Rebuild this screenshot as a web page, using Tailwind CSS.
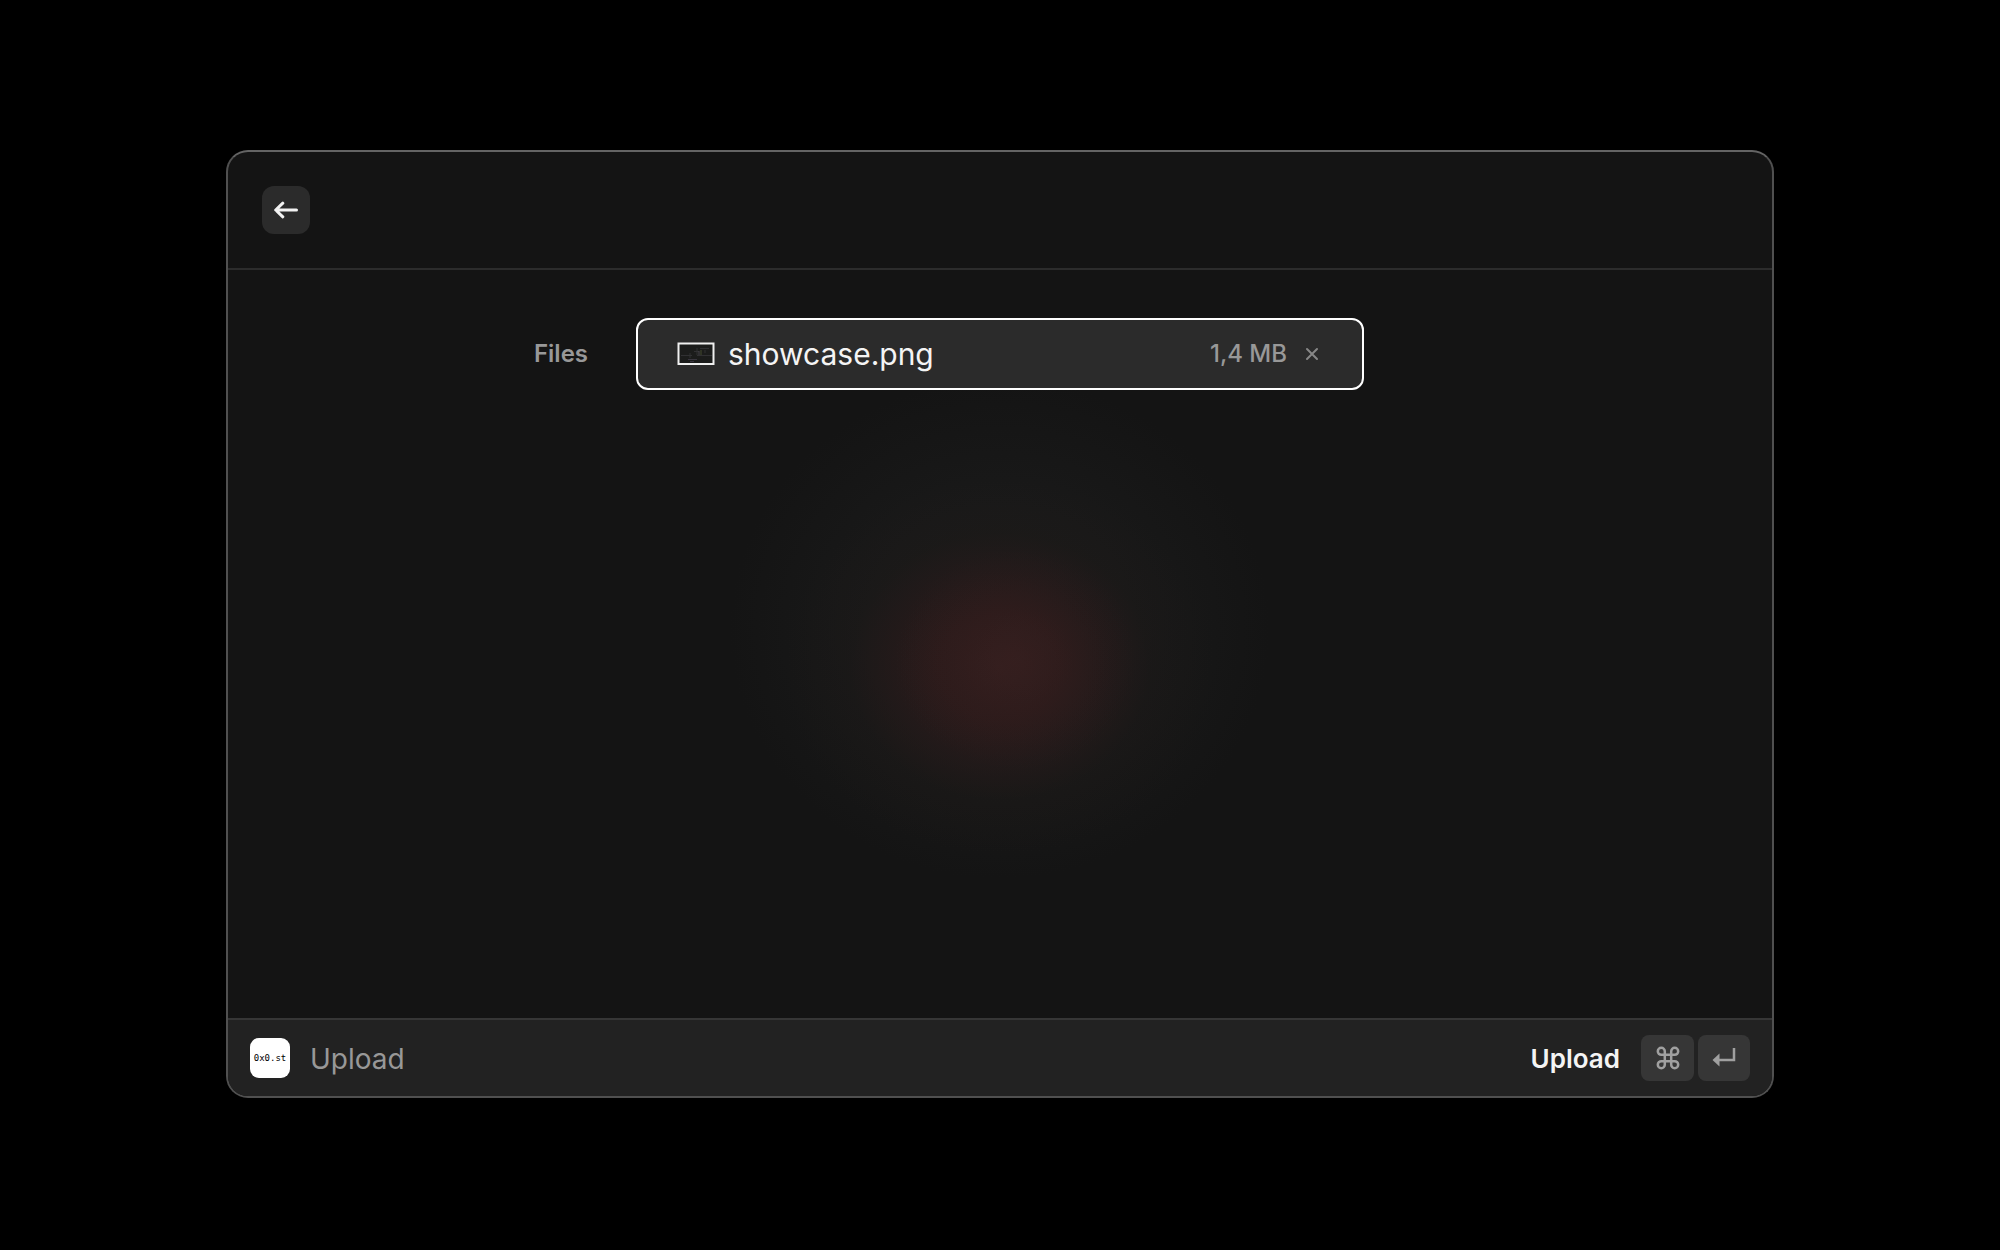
<!DOCTYPE html>
<html lang="en">
<head>
<meta charset="utf-8">
<title>Upload</title>
<script src="https://cdn.jsdelivr.net/npm/@tailwindcss/browser@4"></script>
</head>
<body class="flex min-h-screen flex-col bg-black px-[226px] pt-[150px] pb-[152px] font-['Inter',sans-serif]">
<div class="flex flex-1 flex-col overflow-hidden rounded-[22px] border-2 border-[#505050] border-t-[#646464] bg-[#141414]">
  <header class="flex items-center border-b-2 border-[#2c2c2c] px-[34px] py-[34px]">
    <button type="button" aria-label="Back" class="flex size-12 items-center justify-center rounded-xl bg-[#2b2b2b] text-[#f2f2f2]">
      <svg class="size-6" viewBox="0 0 24 24" fill="none" stroke="currentColor" stroke-width="3" stroke-linecap="round" stroke-linejoin="round"><path d="M22.500 12H2M8.800 5.200 1.700 12l7.100 6.800"/></svg>
    </button>
  </header>

  <main class="flex-1 bg-[radial-gradient(ellipse_120px_110px_at_51%_52%,#3e242450_0%,#35202030_50%,transparent_100%),radial-gradient(ellipse_215px_190px_at_50%_53%,#351d1de0_0%,#311b1bcc_28%,#291a1a90_50%,#1e191750_70%,transparent_100%),radial-gradient(ellipse_270px_250px_at_50%_48%,#1d1b1b_0%,#191919_50%,#141414_100%)] pt-12">
    <div class="grid grid-cols-[1fr_728px_1fr] items-center">
      <label for="files" class="pr-12 text-right text-2xl font-semibold text-[#989898]">Files</label>
      <div class="flex h-[72px] items-center rounded-xl border-2 border-white bg-[#2b2b2b] pr-[42px] pl-[39px]">
        <input id="files" type="file" class="sr-only">
        <svg class="mr-[13px] h-6 w-[38px]" viewBox="0 0 38 24" fill="none">
          <path fill="#1b1c1b" stroke="#f0f0f0" stroke-width="2" d="M1.500 1.500h35v20.500h-35z"/>
          <path stroke="#303032" d="M4 13.500h11M13 11v5M17 9.500h5M20 6v7M20 13.500h15M23 6.500h9M28 8v3"/>
          <path stroke="#39363f" d="M11 17.500h9M13 19.500h4"/>
          <path stroke="#47434b" d="M22 9v4"/><path stroke="#454a2e" d="M24 8v5"/>
        </svg>
        <span class="flex-1 text-3xl text-[#f4f4f4]">showcase.png</span>
        <span class="text-2xl font-medium text-[#989898]">1,4 MB</span>
        <button type="button" aria-label="Remove showcase.png" class="ml-[17px] flex size-4 items-center justify-center text-[#878787]">
          <svg class="size-4" viewBox="0 0 16 16" fill="none" stroke="currentColor" stroke-width="2" stroke-linecap="round"><path d="m3 3 10 10M13 3 3 13"/></svg>
        </button>
      </div>
    </div>
  </main>

  <footer class="flex h-[78px] items-center border-t-2 border-[#363636] bg-[#222222] px-[22px]">
    <div class="flex size-10 items-center justify-center rounded-[9px] bg-white pt-0.5 font-['DejaVu_Sans_Mono',monospace] text-[9px] text-black">0x0.st</div>
    <h1 class="ml-5 flex-1 pt-0.5 text-[28px] text-[#989898]">Upload</h1>
    <button type="button" class="flex items-center text-[#f4f4f4]">
      <span class="mr-[21px] text-[26px] font-semibold">Upload</span>
      <kbd class="mr-1 flex h-[46px] w-[53px] items-center justify-center rounded-lg bg-[#363636] text-[#a0a0a0]">
        <svg class="size-6" viewBox="0 0 24 24" fill="none" stroke="currentColor" stroke-width="2.500"><path d="M8.800 8.800V5.300A3.500 3.500 0 1 0 5.300 8.800h13.400A3.500 3.500 0 1 0 15.200 5.300v13.400A3.500 3.500 0 1 0 18.700 15.200H5.300A3.500 3.500 0 1 0 8.800 18.700z"/></svg>
      </kbd>
      <kbd class="flex h-[46px] w-[52px] items-center justify-center rounded-lg bg-[#363636] text-[#a0a0a0]">
        <svg class="size-6" viewBox="0 0 24 24"><path fill="none" stroke="currentColor" stroke-width="2.500" d="M22 2v12H6"/><path fill="currentColor" d="M.5 14 7.500 7.500v13z"/></svg>
      </kbd>
    </button>
  </footer>
</div>
</body>
</html>
